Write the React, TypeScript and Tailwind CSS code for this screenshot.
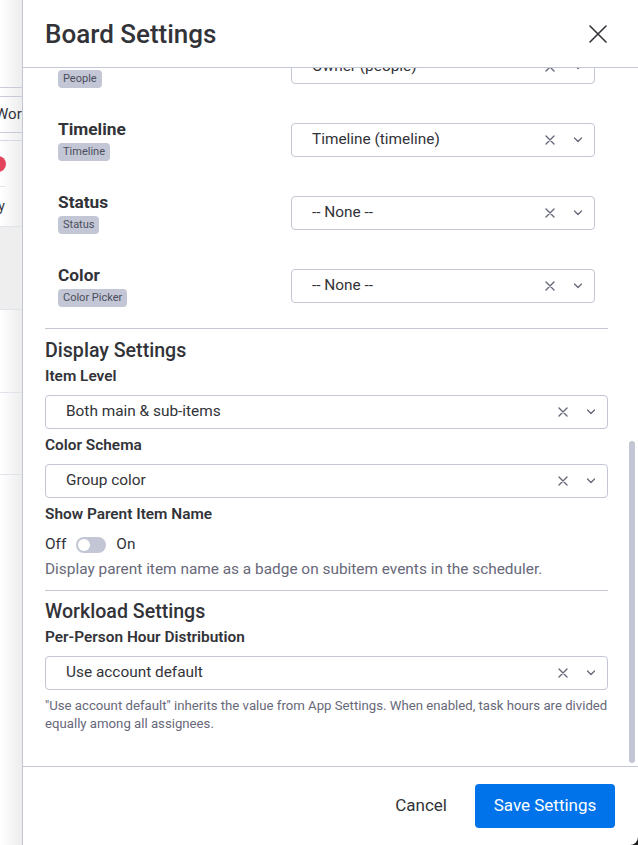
import React from "react";

const ClearIcon = () => (
  <svg width="10" height="10" viewBox="0 0 10 10" className="shrink-0">
    <path d="M1 1L9 9M9 1L1 9" stroke="#676879" strokeWidth="1.4" strokeLinecap="round" />
  </svg>
);

const ChevronIcon = () => (
  <svg width="10" height="6" viewBox="0 0 10 6" className="shrink-0">
    <path d="M1.5 1L5 4.5L8.5 1" stroke="#676879" strokeWidth="1.3" fill="none" strokeLinecap="round" strokeLinejoin="round" />
  </svg>
);

const Select = ({ value, className = "" }: { value: string; className?: string }) => (
  <div className={"h-[34px] border border-[#c3c6d4] rounded-[4px] flex items-center pl-[20px] pr-[11px] bg-white " + className}>
    <span className="flex-1 text-[15.4px] text-[#323338] truncate">{value}</span>
    <ClearIcon />
    <span className="ml-[18px] flex items-center">
      <ChevronIcon />
    </span>
  </div>
);

const MappingRow = ({ title, badge, value }: { title: string; badge: string; value: string }) => (
  <div className="h-[73px] flex items-center justify-between px-[13px]">
    <div className="flex flex-col items-start">
      <div className="text-[17.3px] leading-[22px] font-bold text-[#323338]">{title}</div>
      <div className="mt-[3px] h-[18px] leading-[18px] px-[5px] rounded-[4px] bg-[#c3c6d4] text-[11px] text-[#4b4e5e]">
        {badge}
      </div>
    </div>
    <Select value={value} className="w-[304px]" />
  </div>
);

const Label = ({ children, className = "" }: { children: React.ReactNode; className?: string }) => (
  <div className={"text-[15.4px] leading-[20px] font-semibold text-[#323338] " + className}>{children}</div>
);

export default function App() {
  return (
    <div className="w-[638px] h-[845px] overflow-hidden flex bg-[#1c1c1c] font-['Roboto',sans-serif]">
      {/* background app strip */}
      <div className="w-[22px] h-full shrink-0 bg-linear-to-r from-white to-[#ededed] flex flex-col overflow-hidden">
        <div className="h-[87px] shrink-0" />
        <div className="h-[9px] shrink-0 border-t border-[#c9ccd8]" />
        <div className="h-[36px] shrink-0 border-t border-[#c9ccd8] flex items-center overflow-hidden">
          <span className="-ml-[5px] text-[15px] text-[#323338] whitespace-nowrap">Workload</span>
        </div>
        <div className="h-[8px] shrink-0 border-t border-[#c9ccd8]" />
        <div className="h-[46px] shrink-0 border-t border-[#d5d8e2] flex items-center overflow-hidden">
          <div className="-ml-[10px] w-[16px] h-[16px] rounded-full bg-[#e2445c] shrink-0" />
        </div>
        <div className="h-[40px] shrink-0 border-t border-[#e1e3ea] flex items-center justify-end w-[5px] overflow-hidden">
          <span className="text-[14px] text-[#323338] whitespace-nowrap">Today</span>
        </div>
        <div className="h-[83px] shrink-0 border-t border-[#e1e3ea] bg-[#eeeeef]" />
        <div className="h-[83px] shrink-0 border-t border-[#e1e3ea]" />
        <div className="h-[82px] shrink-0 border-t border-[#e1e3ea]" />
        <div className="flex-1 border-t border-[#e1e3ea]" />
      </div>

      {/* modal */}
      <div className="flex-1 h-full flex flex-col bg-white border-l border-[#c3c6d4] rounded-br-[8px] overflow-hidden">
        {/* header */}
        <div className="h-[68px] shrink-0 border-b border-[#c3c6d4] flex items-center justify-between pl-[22px] pr-[31px]">
          <h1 className="text-[26px] font-medium text-[#323338] leading-none">Board Settings</h1>
          <button className="w-[18px] h-[18px] flex items-center justify-center">
            <svg width="18" height="18" viewBox="0 0 18 18">
              <path d="M1 1L17 17M17 1L1 17" stroke="#323338" strokeWidth="1.6" strokeLinecap="round" />
            </svg>
          </button>
        </div>

        {/* body */}
        <div className="relative flex-1 min-h-0 overflow-hidden flex flex-col justify-end">
          <div className="shrink-0 pl-[22px] pr-[30px] pb-[33px]">
            <div className="pb-[6px]">
              <MappingRow title="Owner" badge="People" value="Owner (people)" />
              <MappingRow title="Timeline" badge="Timeline" value="Timeline (timeline)" />
              <MappingRow title="Status" badge="Status" value="-- None --" />
              <MappingRow title="Color" badge="Color Picker" value="-- None --" />
            </div>
            <div className="border-t border-[#c3c6d4]" />

            <div className="mt-[10px] text-[19.6px] leading-[24px] font-medium text-[#323338]">Display Settings</div>
            <Label className="mt-[3px]">Item Level</Label>
            <Select value="Both main & sub-items" className="mt-[9px]" />
            <Label className="mt-[6px]">Color Schema</Label>
            <Select value="Group color" className="mt-[9px]" />
            <Label className="mt-[6px]">Show Parent Item Name</Label>
            <div className="mt-[11px] h-[20px] flex items-center text-[15.4px] text-[#323338]">
              <span>Off</span>
              <div className="ml-[10px] w-[30px] h-[16px] rounded-full bg-[#c3c6d4] flex items-center px-[2px]">
                <div className="w-[12px] h-[12px] rounded-full bg-white" />
              </div>
              <span className="ml-[10px]">On</span>
            </div>
            <div className="mt-[4px] text-[15.4px] leading-[20px] text-[#676879]">
              Display parent item name as a badge on subitem events in the scheduler.
            </div>
            <div className="mt-[11px] border-t border-[#c3c6d4]" />

            <div className="mt-[9px] text-[19.6px] leading-[24px] font-medium text-[#323338]">Workload Settings</div>
            <Label className="mt-[3px]">Per-Person Hour Distribution</Label>
            <Select value="Use account default" className="mt-[9px]" />
            <div className="mt-[7px] text-[13.2px] leading-[18px] text-[#676879]">
              <div className="whitespace-nowrap">
                "Use account default" inherits the value from App Settings. When enabled, task hours are divided
              </div>
              <div>equally among all assignees.</div>
            </div>
          </div>
          {/* scrollbar thumb */}
          <div className="absolute right-[3px] top-[373px] bottom-[3px] w-[6px] rounded-full bg-[#c3c6d4]" />
        </div>

        {/* footer */}
        <div className="h-[79px] shrink-0 border-t border-[#c3c6d4] flex items-center justify-end pr-[23px] gap-[12px]">
          <button className="h-[44px] px-[16px] text-[17px] text-[#323338]">Cancel</button>
          <button className="h-[44px] w-[140px] rounded-[4px] bg-[#0073ea] text-white text-[17px]">Save Settings</button>
        </div>
      </div>
    </div>
  );
}
